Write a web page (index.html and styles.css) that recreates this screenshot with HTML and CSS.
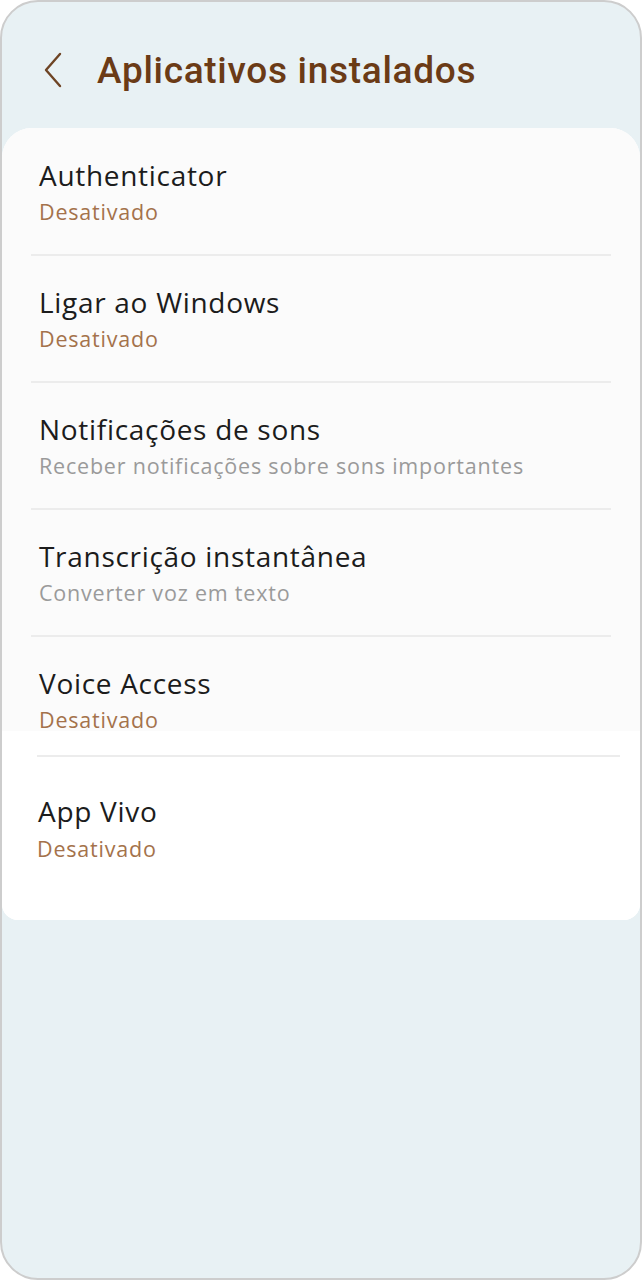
FILE: index.html
```html
<!DOCTYPE html>
<html lang="pt-BR">
<head>
<meta charset="utf-8">
<title>Aplicativos instalados</title>
<link rel="stylesheet" href="styles.css">
</head>
<body>
<div class="phone">
  <header class="header">
    <span class="back">
      <svg width="22" height="36" viewBox="0 0 22 36" aria-hidden="true"><path d="M18 2 L4 18 L18 34" fill="none" stroke="#6e4424" stroke-width="2.4" stroke-linecap="round" stroke-linejoin="round"/></svg>
    </span>
    <h1 class="title">Aplicativos instalados</h1>
  </header>
  <main class="card">
    <div class="group">
      <div class="item">
        <div class="item-title">Authenticator</div>
        <div class="item-sub status">Desativado</div>
      </div>
      <div class="divider"></div>
      <div class="item">
        <div class="item-title">Ligar ao Windows</div>
        <div class="item-sub status">Desativado</div>
      </div>
      <div class="divider"></div>
      <div class="item">
        <div class="item-title">Notificações de sons</div>
        <div class="item-sub desc">Receber notificações sobre sons importantes</div>
      </div>
      <div class="divider"></div>
      <div class="item">
        <div class="item-title">Transcrição instantânea</div>
        <div class="item-sub desc">Converter voz em texto</div>
      </div>
      <div class="divider"></div>
      <div class="item item-last">
        <div class="item-title">Voice Access</div>
        <div class="item-sub status">Desativado</div>
      </div>
    </div>
    <div class="group-white">
      <div class="divider divider-shift"></div>
      <div class="item item-vivo">
        <div class="item-title">App Vivo</div>
        <div class="item-sub status sub-vivo">Desativado</div>
      </div>
    </div>
  </main>
</div>
</body>
</html>
```

FILE: styles.css
```css
* { box-sizing: border-box; }
html, body { margin: 0; padding: 0; background: #ffffff; }
body { font-family: "Open Sans", Roboto, "Noto Sans", "Liberation Sans", sans-serif; }

.phone {
  width: 642px;
  height: 1280px;
  border: 2px solid #cdcdcd;
  border-radius: 38px;
  background: #e8f1f4;
  overflow: hidden;
}

.header {
  height: 126px;
  display: flex;
  align-items: center;
  padding: 10px 0 0 40px;
}
.back { display: flex; width: 22px; height: 36px; }
.title {
  margin: 0 0 0 33px;
  font-family: Roboto, "Open Sans", sans-serif;
  font-size: 37px;
  font-weight: 500;
  color: #6b3b16;
  letter-spacing: 0.7px;
}

.card {
  background: #ffffff;
  border-radius: 30px 30px 16px 16px;
  overflow: hidden;
}
.group {
  background: #fbfbfb;
  padding-top: 1px;
}
.group-white { background: #ffffff; padding-bottom: 57px; }

.item {
  padding: 28px 37px 28px 37px;
  display: flex;
  flex-direction: column;
  gap: 5px;
}
.item-last { padding-bottom: 0; height: 94px; }
.item-vivo { padding: 36px 36px 0 36px; gap: 6px; }

.item-title {
  font-size: 28px;
  line-height: 36px;
  letter-spacing: 0.7px;
  color: #1c1c1c;
}
.item-sub {
  font-size: 21.5px;
  line-height: 28px;
  letter-spacing: 0.8px;
}
.status { color: #a4724b; }
.desc { color: #9a9a9a; }
.sub-vivo { margin-left: -1px; }

.divider {
  height: 2px;
  margin: 0 29px;
  background: #ececec;
}
.divider-shift { margin: 24px 20px 0 35px; }
```
